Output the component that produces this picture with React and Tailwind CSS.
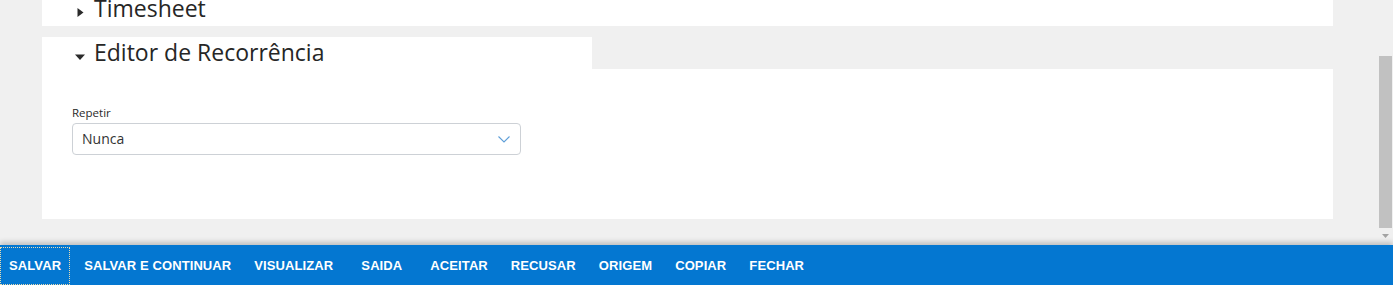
export default function App() {
  const buttons = [
    "SALVAR",
    "SALVAR E CONTINUAR",
    "VISUALIZAR",
    "SAIDA",
    "ACEITAR",
    "RECUSAR",
    "ORIGEM",
    "COPIAR",
    "FECHAR",
  ];
  return (
    <div className="w-[1393px] h-[285px] flex flex-col bg-[#f0f0f0] overflow-hidden font-['Open_Sans',sans-serif]">
      <div className="flex h-[245px] shrink-0">
        <div className="flex-1 pl-[42px] pr-[45px]">
          <div className="h-[26px] bg-white overflow-hidden">
            <div className="flex items-start pl-[33px] mt-[-8px] h-[34px]">
              <div className="w-[10px] mt-[16px] flex justify-center">
                <svg width="7" height="9" viewBox="0 0 7 9">
                  <polygon points="0.5,0 6.5,4.5 0.5,9" fill="#2a2a2a" />
                </svg>
              </div>
              <h2 className="ml-[9px] text-[23px] leading-[32px] text-[#262626] font-normal">Timesheet</h2>
            </div>
          </div>
          <div className="mt-[11px] w-[550px] h-[32px] bg-white flex items-start pl-[33px]">
            <div className="w-[10px] mt-[17px] flex justify-center">
              <svg width="10" height="6" viewBox="0 0 10 6">
                <polygon points="0,0.5 10,0.5 5,6" fill="#2a2a2a" />
              </svg>
            </div>
            <h2 className="ml-[9px] text-[23px] leading-[30px] text-[#262626] font-normal">Editor de Recorrência</h2>
          </div>
          <div className="h-[150px] bg-white pl-[30px] pt-[36px]">
            <label className="block text-[11.5px] leading-[16px] text-[#2a2a2a]">Repetir</label>
            <div className="mt-[2px] w-[449px] h-[32px] border border-[#cdd1d6] rounded-[4px] flex items-center justify-between pl-[9px] pr-[10px] bg-white">
              <span className="text-[14px] leading-[30px] text-[#333]">Nunca</span>
              <svg width="12" height="7" viewBox="0 0 12 7" fill="none">
                <polyline points="0.5,0.5 6,6 11.5,0.5" stroke="#5f9fd8" strokeWidth="1.1" />
              </svg>
            </div>
          </div>
        </div>
        <div className="w-[15px] flex flex-col items-center">
          <div className="mt-[56px] h-[172px] w-[13px] bg-[#c1c1c1]" />
          <svg className="mt-[6px]" width="7" height="4" viewBox="0 0 7 4">
            <polygon points="0,0 7,0 3.5,4" fill="#a3a3a3" />
          </svg>
        </div>
      </div>
      <div className="relative h-[40px] shrink-0 bg-[#0477d1] shadow-[0_-3px_5px_rgba(0,0,0,0.2)] flex gap-[5px] overflow-hidden">
        {buttons.map((b, i) => (
          <div
            key={b}
            className={
              i === 0
                ? "mt-[2px] h-[38px] min-w-[69px] px-[8px] flex items-center justify-center border border-dotted border-[#eadcb0] font-['Liberation_Sans',Arial,sans-serif] font-bold text-[13px] tracking-[0.1px] text-white whitespace-nowrap"
                : "mt-[2px] h-[38px] min-w-[69px] px-[8px] flex items-center justify-center border border-transparent font-['Liberation_Sans',Arial,sans-serif] font-bold text-[13px] tracking-[0.1px] text-white whitespace-nowrap"
            }
          >
            {b}
          </div>
        ))}
      </div>
    </div>
  );
}
